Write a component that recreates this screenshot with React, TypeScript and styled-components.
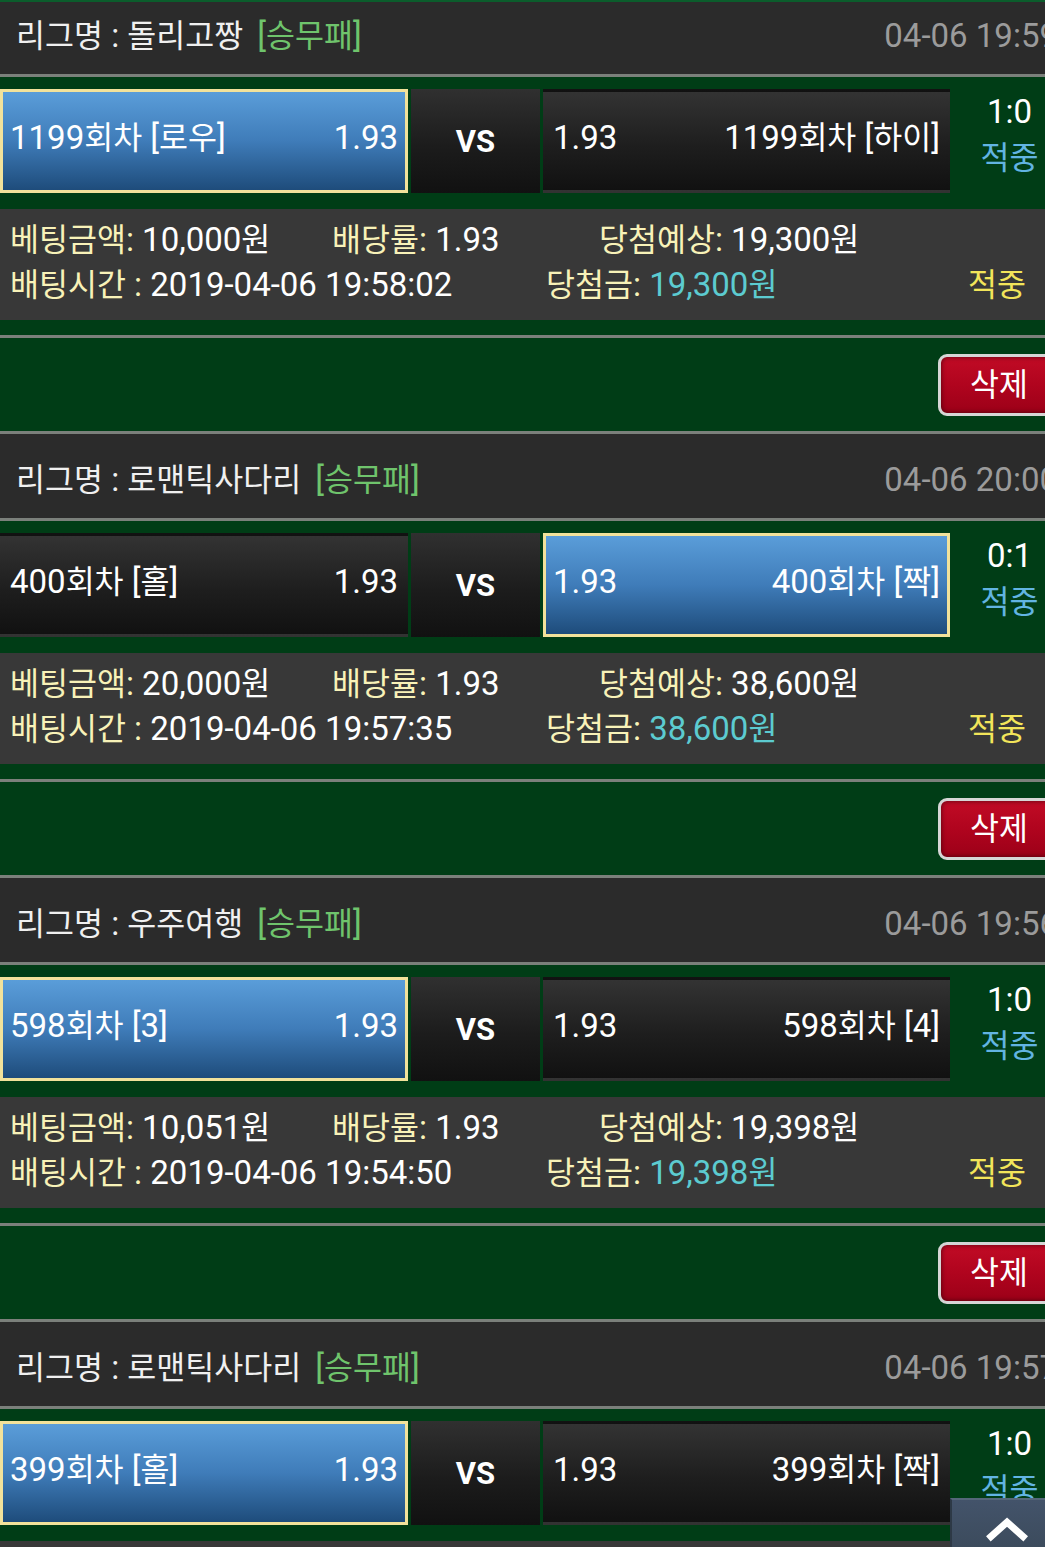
import React from 'react';
import styled, { createGlobalStyle } from 'styled-components';

const Global = createGlobalStyle`
  html, body {
    margin: 0;
    padding: 0;
    overflow: hidden;
    background: #003d16;
  }
  body {
    font-family: Roboto, "Noto Sans CJK KR", sans-serif;
  }
`;

const GREEN = '#003d16';
const RULE = '#7b807b';

const TopLine = styled.div`
  position: fixed;
  top: 0;
  left: 0;
  right: 0;
  height: 2px;
  background: #0b5d2c;
  z-index: 3;
`;

const Page = styled.main`
  width: 1066px;
  margin-top: -10px;
  background: ${GREEN};
`;

const Block = styled.section`
  display: flex;
  flex-direction: column;
`;

const Header = styled.header`
  height: 87px;
  box-sizing: border-box;
  display: flex;
  align-items: center;
  justify-content: space-between;
  padding: 7px 8px 0 16px;
  background: #2b2b2b;
  border-bottom: 3px solid ${RULE};
  font-size: 33px;
  line-height: 40px;
  color: #f0f0f0;
  white-space: nowrap;
`;

const League = styled.div`
  display: flex;
  align-items: baseline;
`;

const Tag = styled.span`
  margin-left: 14px;
  color: #6fc46c;
`;

const DateText = styled.span`
  color: #9b9b9b;
`;

const MatchRow = styled.div`
  margin-top: 12px;
  height: 104px;
  display: grid;
  grid-template-columns: 408px 129px 407px 1fr;
  column-gap: 3px;
`;

const Team = styled.div<{ $selected?: boolean; $reverse?: boolean }>`
  display: flex;
  flex-direction: ${(p) => (p.$reverse ? 'row-reverse' : 'row')};
  align-items: center;
  justify-content: space-between;
  box-sizing: border-box;
  padding: 0 7px 6px;
  border: 3px solid ${(p) => (p.$selected ? '#f2e29b' : 'transparent')};
  background: ${(p) =>
    p.$selected
      ? 'linear-gradient(180deg, #5a9dd9 0%, #3f7cb9 50%, #1e4c7b 100%)'
      : 'linear-gradient(180deg, #333333 0%, #1e1e1e 55%, #111111 100%)'};
  color: #ffffff;
  font-size: 33px;
  line-height: 40px;
  white-space: nowrap;
`;

const Versus = styled.div`
  display: flex;
  align-items: center;
  justify-content: center;
  background: linear-gradient(180deg, #303030 0%, #1c1c1c 55%, #111111 100%);
  color: #ffffff;
  font-size: 31px;
  font-weight: 700;
`;

const Score = styled.div`
  display: flex;
  flex-direction: column;
  align-items: center;
  justify-content: center;
  padding-bottom: 12px;
  font-size: 33px;
  line-height: 46px;
  color: #ffffff;
`;

const Result = styled.span`
  color: #62b4e2;
`;

const Info = styled.div`
  margin-top: 16px;
  height: 111px;
  box-sizing: border-box;
  padding: 8px 40px 9px 10px;
  background: #383838;
  font-size: 33px;
  line-height: 45px;
  color: #ffffff;
  white-space: nowrap;
`;

const InfoLine = styled.div`
  display: flex;
`;

const Field = styled.span<{ $w?: number }>`
  flex: none;
  width: ${(p) => (p.$w ? `${p.$w}px` : 'auto')};
`;

const Label = styled.span`
  color: #f8f2b8;
`;

const Money = styled.span<{ $tone?: 'cyan' }>`
  color: ${(p) => (p.$tone === 'cyan' ? '#5ccbd0' : '#ffffff')};
`;

const Status = styled.span`
  margin-left: auto;
  color: #f2e55a;
`;

const DeleteRow = styled.div`
  margin-top: 15px;
  height: 99px;
  box-sizing: border-box;
  border-top: 3px solid ${RULE};
  border-bottom: 3px solid ${RULE};
  display: flex;
  align-items: center;
  justify-content: flex-end;
  padding-right: 10px;
`;

const DeleteButton = styled.button`
  width: 118px;
  height: 62px;
  box-sizing: border-box;
  border: 3px solid #d6d6d6;
  border-radius: 9px;
  background: linear-gradient(180deg, #c10b25 0%, #b0041e 50%, #9c0018 100%);
  box-shadow: inset 0 0 5px rgba(0, 0, 0, 0.55);
  color: #ffffff;
  font-family: inherit;
  font-size: 30px;
  padding: 0 0 0 4px;
`;

const TopButton = styled.button`
  position: fixed;
  left: 950px;
  top: 1498px;
  width: 116px;
  height: 62px;
  padding: 0;
  border: none;
  border-top: 2px solid #55677a;
  border-left: 2px solid #2d3946;
  background: linear-gradient(180deg, #43536a 0%, #3a4959 100%);
  display: flex;
  justify-content: flex-start;
  align-items: flex-start;
  z-index: 4;
`;

const Hangul = styled.span`
  font-family: "Noto Sans CJK KR", sans-serif;
  font-size: 31.5px;
  line-height: 1;
`;

function T({ children }: { children: string }) {
  const parts = children.split(/([\u3131-\uD7A3]+)/);
  return (
    <>
      {parts.map((p, i) =>
        /[\u3131-\uD7A3]/.test(p) ? <Hangul key={i}>{p}</Hangul> : <React.Fragment key={i}>{p}</React.Fragment>
      )}
    </>
  );
}

type Bet = {
  league: string;
  date: string;
  home: string;
  away: string;
  pick: 'home' | 'away';
  score: string;
  amount: string;
  expected: string;
  time: string;
};

const bets: Bet[] = [
  {
    league: '돌리고짱',
    date: '04-06 19:59',
    home: '1199회차 [로우]',
    away: '1199회차 [하이]',
    pick: 'home',
    score: '1:0',
    amount: '10,000원',
    expected: '19,300원',
    time: '2019-04-06 19:58:02',
  },
  {
    league: '로맨틱사다리',
    date: '04-06 20:00',
    home: '400회차 [홀]',
    away: '400회차 [짝]',
    pick: 'away',
    score: '0:1',
    amount: '20,000원',
    expected: '38,600원',
    time: '2019-04-06 19:57:35',
  },
  {
    league: '우주여행',
    date: '04-06 19:56',
    home: '598회차 [3]',
    away: '598회차 [4]',
    pick: 'home',
    score: '1:0',
    amount: '10,051원',
    expected: '19,398원',
    time: '2019-04-06 19:54:50',
  },
  {
    league: '로맨틱사다리',
    date: '04-06 19:57',
    home: '399회차 [홀]',
    away: '399회차 [짝]',
    pick: 'home',
    score: '1:0',
    amount: '10,000원',
    expected: '19,300원',
    time: '2019-04-06 19:55:41',
  },
];

function BetBlock({ bet }: { bet: Bet }) {
  return (
    <Block>
      <Header>
        <League>
          <span>
            <T>{`리그명 : ${bet.league}`}</T>
          </span>
          <Tag>
            <T>[승무패]</T>
          </Tag>
        </League>
        <DateText>{bet.date}</DateText>
      </Header>
      <MatchRow>
        <Team $selected={bet.pick === 'home'}>
          <span>
            <T>{bet.home}</T>
          </span>
          <span>1.93</span>
        </Team>
        <Versus>VS</Versus>
        <Team $selected={bet.pick === 'away'} $reverse>
          <span>
            <T>{bet.away}</T>
          </span>
          <span>1.93</span>
        </Team>
        <Score>
          <span>{bet.score}</span>
          <Result>
            <T>적중</T>
          </Result>
        </Score>
      </MatchRow>
      <Info>
        <InfoLine>
          <Field $w={322}>
            <Label>
              <T>베팅금액:</T>
            </Label>{' '}
            <Money>
              <T>{bet.amount}</T>
            </Money>
          </Field>
          <Field $w={267}>
            <Label>
              <T>배당률:</T>
            </Label>{' '}
            <Money>1.93</Money>
          </Field>
          <Field>
            <Label>
              <T>당첨예상:</T>
            </Label>{' '}
            <Money>
              <T>{bet.expected}</T>
            </Money>
          </Field>
        </InfoLine>
        <InfoLine>
          <Field $w={536}>
            <Label>
              <T>배팅시간 :</T>
            </Label>{' '}
            <Money>{bet.time}</Money>
          </Field>
          <Field>
            <Label>
              <T>당첨금:</T>
            </Label>{' '}
            <Money $tone="cyan">
              <T>{bet.expected}</T>
            </Money>
          </Field>
          <Status>
            <T>적중</T>
          </Status>
        </InfoLine>
      </Info>
      <DeleteRow>
        <DeleteButton>
          <T>삭제</T>
        </DeleteButton>
      </DeleteRow>
    </Block>
  );
}

export default function App() {
  return (
    <>
      <Global />
      <TopLine />
      <Page>
        {bets.map((b, i) => (
          <BetBlock key={i} bet={b} />
        ))}
      </Page>
      <TopButton aria-label="맨 위로">
        <svg width="116" height="60" viewBox="0 0 116 60">
          <polyline
            points="37,39 56,22 75,39"
            fill="none"
            stroke="#ffffff"
            strokeWidth="7"
            strokeLinecap="butt"
            strokeLinejoin="miter"
          />
        </svg>
      </TopButton>
    </>
  );
}
